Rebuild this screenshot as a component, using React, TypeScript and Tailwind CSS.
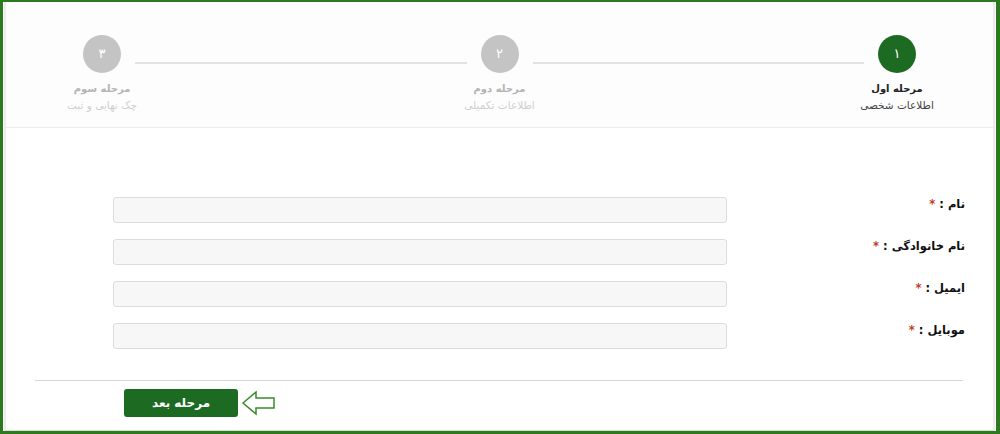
import React from "react";

const font = { fontFamily: '"DejaVu Sans", Tahoma, sans-serif' };

function Step({ n, title, sub, active }: { n: string; title: string; sub: string; active?: boolean }) {
  return (
    <div className="flex flex-col items-center w-[38px] shrink-0">
      <div
        className={`w-[38px] h-[38px] rounded-full flex items-center justify-center text-[13px] text-white ${
          active ? "bg-[#1d6a22]" : "bg-[#c4c4c4]"
        }`}
      >
        {n}
      </div>
      <div className="w-[140px] flex flex-col items-center mt-[8px] whitespace-nowrap">
        <div className={`text-[10px] leading-[16px] font-bold ${active ? "text-[#222]" : "text-[#b4b4b4]"}`}>{title}</div>
        <div className={`text-[10.5px] leading-[16px] ${active ? "text-[#444]" : "text-[#cfcfcf]"}`}>{sub}</div>
      </div>
    </div>
  );
}

function Line() {
  return <div className="flex-1 h-[2px] bg-[#e2e2e2] mt-[27px] mx-[14px]" />;
}

function Field({ label }: { label: string }) {
  return (
    <div className="flex items-center h-[26px]">
      <div className="w-[238px] shrink-0 text-[11.5px] font-bold text-[#111] flex items-center gap-[4px] -mt-[10px]">
        <span>{label} :</span>
        <span className="text-[#c0392b]">*</span>
      </div>
      <div className="w-[614px] h-[26px] bg-[#f7f7f7] border border-[#dcdcdc] rounded-[3px]" />
    </div>
  );
}

export default function App() {
  return (
    <div
      dir="rtl"
      style={font}
      className="w-[1000px] h-[434px] bg-white border-t-2 border-l-[3px] border-r-[4px] border-b-[3px] border-[#2b7a1f] overflow-hidden"
    >
      <div className="h-full border-l-2 border-r-2 border-b border-l-[#ececec] border-r-[#ececec] border-b-[#cfe6c8] ml-[1px] mr-[1px] flex flex-col">
        <div className="h-[126px] bg-[#fdfdfd] border-b border-[#ececec] flex pt-[33px] pr-[77px] pl-[77px] shrink-0">
          <Step n="۱" title="مرحله اول" sub="اطلاعات شخصی" active />
          <Line />
          <Step n="۲" title="مرحله دوم" sub="اطلاعات تکمیلی" />
          <Line />
          <Step n="۳" title="مرحله سوم" sub="چک نهایی و ثبت" />
        </div>
        <div className="flex flex-col gap-[16px] pt-[69px] pr-[28px]">
          <Field label="نام" />
          <Field label="نام خانوادگی" />
          <Field label="ایمیل" />
          <Field label="موبایل" />
        </div>
        <div className="h-[1px] bg-[#d6d6d6] mr-[30px] ml-[29px] mt-[31px]" />
        <div dir="ltr" className="flex items-center mt-[8px] ml-[118px]">
          <button
            dir="rtl"
            className="w-[114px] h-[28px] bg-[#1d6a22] rounded-[3px] text-white text-[12px] font-bold flex items-center justify-center"
          >
            مرحله بعد
          </button>
          <svg width="36" height="26" viewBox="0 0 36 26" className="ml-[3px]">
            <polygon
              points="2,13 15,2 15,8 33,8 33,18 15,18 15,24"
              fill="white"
              stroke="#3a8a2a"
              strokeWidth="1.5"
              strokeLinejoin="miter"
            />
          </svg>
        </div>
      </div>
    </div>
  );
}
